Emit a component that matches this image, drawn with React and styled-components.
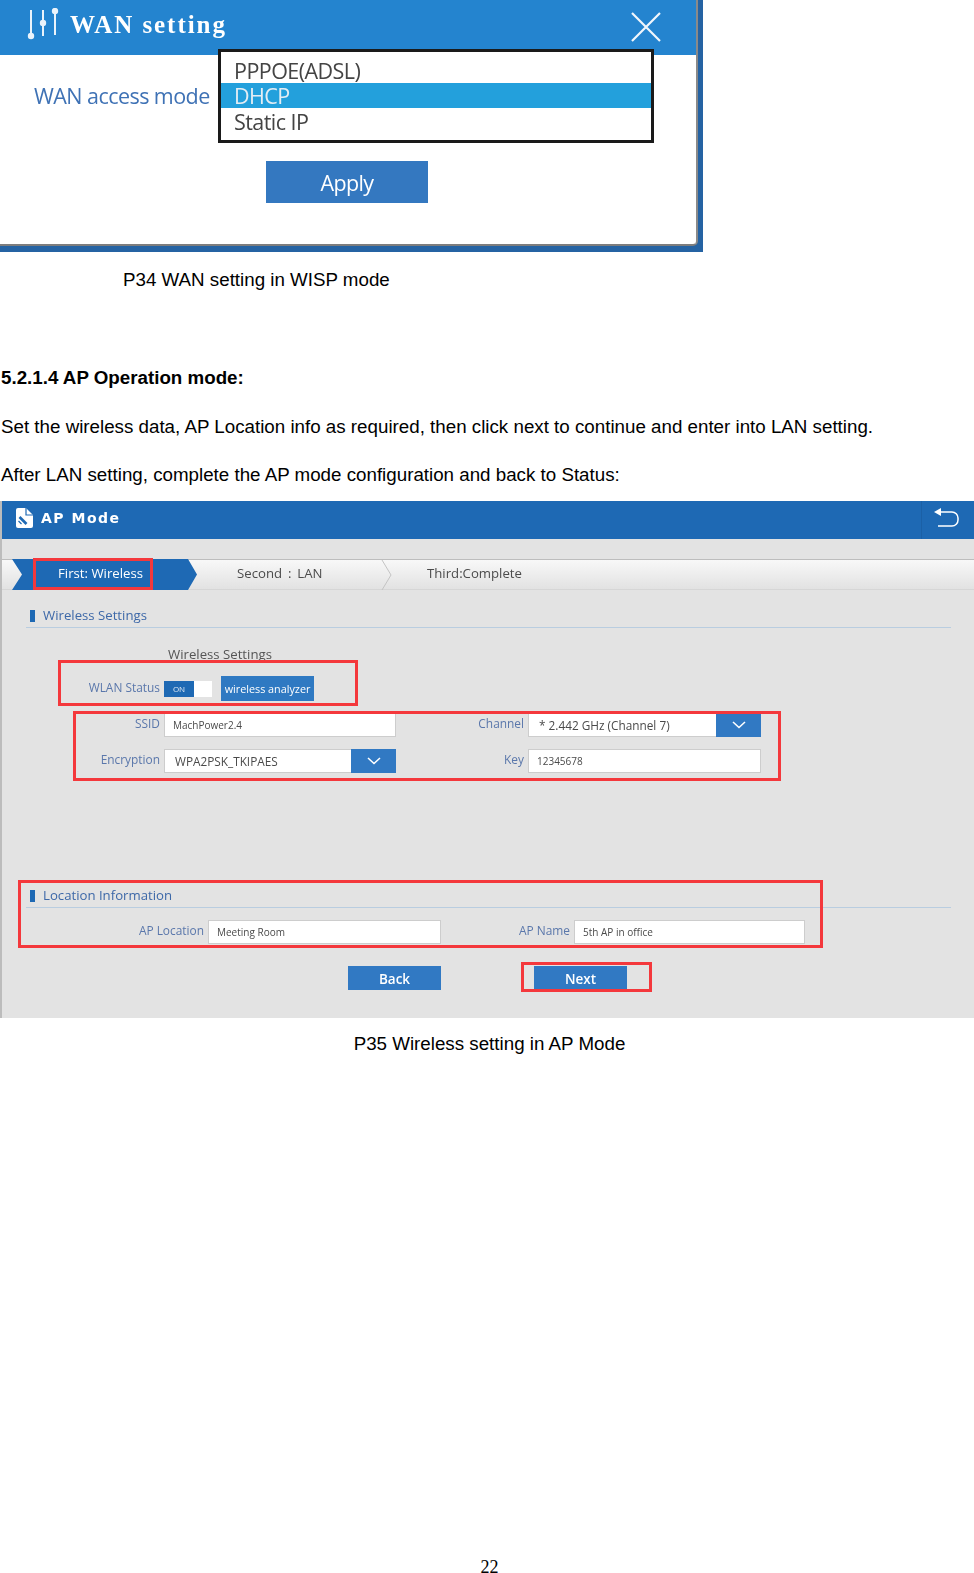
import React from 'react';
import styled, { createGlobalStyle } from 'styled-components';

const GlobalStyle = createGlobalStyle`
  html, body {
    margin: 0;
    padding: 0;
    background: #fff;
  }
  body {
    font-family: "Liberation Sans", Arial, sans-serif;
    color: #000;
  }
`;

const Page = styled.div`
  width: 974px;
  height: 1573px;
  display: flex;
  flex-direction: column;
  overflow: hidden;
`;

/* ---------- document text ---------- */
const Caption = styled.div`
  font-size: 18.76px;
  line-height: 24px;
  padding-left: ${(p) => p.$indent || 0}px;
  text-align: ${(p) => (p.$center ? 'center' : 'left')};
  margin-top: ${(p) => p.$top || 0}px;
`;

const Heading = styled.h3`
  margin: 74px 0 0 1px;
  font-size: 18.76px;
  line-height: 24px;
  font-weight: bold;
`;

const Para = styled.p`
  margin: ${(p) => p.$top || 24}px 0 0 1px;
  font-size: 18.76px;
  line-height: 24px;
  white-space: nowrap;
`;

const PageNumber = styled.div`
  margin-top: auto;
  text-align: center;
  font-family: "Liberation Serif", serif;
  font-size: 18px;
  line-height: 12px;
  padding-left: 5px;
`;

/* ---------- WAN setting dialog ---------- */
const WanShot = styled.div`
  position: relative;
  width: 703px;
  height: 252px;
  box-sizing: border-box;
  padding: 0 5px 6px 0;
  background: #2563a3;
  filter: blur(0.35px);
`;

const WanPanel = styled.div`
  height: 100%;
  box-sizing: border-box;
  background: #fff;
  border-right: 2px solid #8a8a8a;
  border-bottom: 2px solid #7d7d7d;
  border-bottom-right-radius: 5px;
  display: flex;
  flex-direction: column;
`;

const WanHeader = styled.div`
  height: 55px;
  box-sizing: border-box;
  background: #2484cf;
  display: flex;
  align-items: center;
  padding: 0 34px 5px 27px;
  color: #fff;
`;

const WanTitle = styled.div`
  margin-left: 9px;
  font-family: "Liberation Serif", serif;
  font-weight: bold;
  font-size: 25px;
  letter-spacing: 1.95px;
`;

const WanClose = styled.svg`
  margin: 3px 0 0 auto;
  display: block;
`;

const WanBody = styled.div`
  flex: 1;
  padding: 27px 0 0 34px;
`;

const WanLabel = styled.div`
  font-family: "Open Sans", sans-serif;
  font-size: 21.5px;
  line-height: 28px;
  letter-spacing: -0.55px;
  color: #3f72b5;
`;

const ApplyButton = styled.div`
  width: 162px;
  height: 42px;
  margin: 51px 0 0 232px;
  background: #3478c0;
  color: #fff;
  font-family: "Open Sans", sans-serif;
  font-size: 21.5px;
  letter-spacing: -0.6px;
  line-height: 44px;
  text-align: center;
`;

const ModeList = styled.div`
  position: absolute;
  left: 218px;
  top: 49px;
  width: 436px;
  height: 94px;
  box-sizing: border-box;
  border: 3px solid #1a1a1a;
  background: #fff;
  padding-top: 5px;
`;

const ModeOption = styled.div`
  height: ${(p) => (p.$active ? 25 : 26)}px;
  box-sizing: border-box;
  padding: ${(p) => (p.$active ? 0 : 1)}px 0 0 13px;
  line-height: 25px;
  font-family: "Open Sans", sans-serif;
  font-size: 21.5px;
  letter-spacing: -0.55px;
  color: ${(p) => (p.$active ? '#e4edf4' : '#444')};
  background: ${(p) => (p.$active ? '#23a0dc' : 'transparent')};
`;

/* ---------- AP mode screen ---------- */
const ApShot = styled.div`
  position: relative;
  margin-top: 14px;
  width: 974px;
  height: 517px;
  box-sizing: border-box;
  border-left: 2px solid #bcbcbc;
  background: #e3e3e3;
  font-family: "Open Sans", sans-serif;
  color: #555;
  filter: blur(0.3px);
`;

const ApHeader = styled.div`
  height: 38px;
  background: #1e69b4;
  display: flex;
  align-items: stretch;
  color: #fff;
`;

const ApBrand = styled.div`
  display: flex;
  align-items: center;
  gap: 7px;
  padding-left: 14px;
  font-family: "DejaVu Sans", sans-serif;
  font-weight: bold;
  font-size: 14px;
  letter-spacing: 1.5px;
  padding-bottom: 4px;
`;

const BackCorner = styled.div`
  margin-left: auto;
  width: 53px;
  box-sizing: border-box;
  border-left: 1px solid #1b60a6;
  display: flex;
  align-items: center;
  justify-content: center;
  padding: 0 4px 4px 0;
`;

const Steps = styled.div`
  margin-top: 20px;
  height: 31px;
  box-sizing: border-box;
  border-top: 1px solid #bdbdbd;
  border-bottom: 1px solid #d6d6d6;
  background: linear-gradient(#f8f8f8, #e2e2e2);
  display: flex;
  align-items: center;
  font-size: 13.2px;
  color: #4c4c4c;
`;

const StepActive = styled.div`
  position: relative;
  margin-left: 10px;
  width: 185px;
  height: 31px;
  box-sizing: border-box;
  padding-left: 46px;
  line-height: 29px;
  background: #1e69b4;
  color: #fff;
  clip-path: polygon(0 0, 176px 0, 185px 50%, 176px 100%, 0 100%, 10px 50%);
`;

const Step = styled.div`
  width: ${(p) => p.$width}px;
  padding: 0 0 4px ${(p) => p.$pad}px;
  box-sizing: border-box;
  white-space: nowrap;
  word-spacing: ${(p) => p.$spread || 0}px;
`;

const StepChevron = styled.svg`
  flex: none;
  display: block;
`;

const SectionTitle = styled.div`
  margin: ${(p) => p.$top}px 23px 0 24px;
  height: 21px;
  box-sizing: border-box;
  border-bottom: 1px solid #b9cde0;
  display: flex;
  align-items: flex-start;
  gap: 8px;
  padding-left: 4px;
  font-size: 13.2px;
  line-height: 16px;
  color: #3d68a8;

  &::before {
    content: "";
    width: 5px;
    height: 12px;
    margin-top: 3px;
    background: #1e69b4;
  }
`;

const SubTitle = styled.div`
  margin: 18px 0 0 166px;
  font-size: 13.2px;
  line-height: 17px;
  height: 13px;
  overflow: visible;
  color: #555;
`;

const StatusRow = styled.div`
  margin: 17px 0 0;
  display: flex;
  align-items: center;
  height: 25px;
`;

const FieldLabel = styled.div`
  font-size: 11.9px;
  line-height: 14px;
  color: #5a77ab;
  text-align: right;
  white-space: nowrap;
  padding-bottom: ${(p) => (p.$raised ? 4 : 0)}px;
`;

const StatusLabel = styled(FieldLabel)`
  width: 158px;
  padding-bottom: 4px;
`;

const Toggle = styled.div`
  width: 48px;
  height: 16px;
  margin-left: 4px;
  display: flex;
  background: #fff;
`;

const ToggleOn = styled.div`
  width: 30px;
  background: #1e69b4;
  color: #dfe9f4;
  font-size: 8px;
  line-height: 16px;
  text-align: center;
`;

const AnalyzerButton = styled.div`
  width: 93px;
  height: 25px;
  margin-left: 9px;
  background: #2f79c2;
  color: #fff;
  font-size: 10.8px;
  line-height: 26px;
  text-align: center;
  white-space: nowrap;
`;

const FieldGrid = styled.div`
  display: grid;
  grid-template-columns: ${(p) => p.$columns};
  column-gap: 4px;
  row-gap: 12px;
  align-items: center;
  margin-top: ${(p) => p.$top}px;
`;

const TextBox = styled.div`
  height: 24px;
  box-sizing: border-box;
  background: #fff;
  border: 1px solid #cdcdcd;
  padding-left: 8px;
  font-size: 10px;
  line-height: 23px;
  color: #4a4a4a;
  white-space: nowrap;
`;

const SelectBox = styled.div`
  height: 24px;
  box-sizing: border-box;
  background: #fff;
  border: 1px solid #cdcdcd;
  border-right: 0;
  padding-left: 10px;
  display: flex;
  align-items: center;
  font-size: 11.8px;
  color: #4a4a4a;
  white-space: nowrap;
`;

const SelectArrow = styled.div`
  margin-left: auto;
  width: 45px;
  height: 24px;
  flex: none;
  background: #3179c3;
  display: flex;
  align-items: center;
  justify-content: center;
`;

const ButtonRow = styled.div`
  margin: 22px 0 0 346px;
  display: flex;
  gap: 93px;
`;

const ActionButton = styled.div`
  width: 93px;
  height: 24px;
  background: #3179c3;
  color: #fff;
  font-size: 13.5px;
  font-weight: 600;
  line-height: 26px;
  text-align: center;
`;

// red annotation frames drawn over the screenshot
const Mark = styled.div`
  position: absolute;
  left: ${(p) => p.$x - 2}px;
  top: ${(p) => p.$y - 501}px;
  width: ${(p) => p.$w}px;
  height: ${(p) => p.$h}px;
  box-sizing: border-box;
  border: 3px solid #f4383c;
  pointer-events: none;
`;

const SlidersIcon = () => (
  <svg width="34" height="34" viewBox="0 0 34 34" fill="none" stroke="#eaf3fb" strokeWidth="2">
    <path d="M4 2v26M16 2v26M28 3v24" />
    <circle cx="4" cy="28" r="3.2" fill="#eaf3fb" stroke="none" />
    <circle cx="16" cy="15" r="3.2" fill="#eaf3fb" stroke="none" />
    <circle cx="28" cy="3" r="3.2" fill="#eaf3fb" stroke="none" />
  </svg>
);

const DocIcon = () => (
  <svg width="18" height="20" viewBox="0 0 18 20">
    <path d="M2 0h8l7 7v11a2 2 0 0 1-2 2H2a2 2 0 0 1-2-2V2a2 2 0 0 1 2-2z" fill="#fff" />
    <path d="M10 0v7h7" fill="none" stroke="#1e69b4" strokeWidth="1.2" />
    <path d="M3.5 9l7 7" stroke="#1e69b4" strokeWidth="2.6" />
    <path d="M2.5 13l3 3" stroke="#1e69b4" strokeWidth="1.2" />
  </svg>
);

const BackIcon = () => (
  <svg width="26" height="20" viewBox="0 0 26 20" fill="none">
    <path d="M1 4l7-4v8z" fill="#fff" />
    <path d="M7 4h12a6 6 0 0 1 6 6v2a6 6 0 0 1-6 6H5" stroke="#fff" strokeWidth="1.5" />
  </svg>
);

const ChevronDown = () => (
  <svg width="14" height="8" viewBox="0 0 14 8" fill="none">
    <path d="M1 1l6 5.5L13 1" stroke="#fff" strokeWidth="1.6" />
  </svg>
);

const App = () => (
  <>
    <GlobalStyle />
    <Page>
      <WanShot>
        <WanPanel>
          <WanHeader>
            <SlidersIcon />
            <WanTitle>WAN setting</WanTitle>
            <WanClose width="32" height="30" viewBox="0 0 32 30" fill="none">
              <path d="M2 1l28 28M30 1L2 29" stroke="#f1f7fc" strokeWidth="2.2" />
            </WanClose>
          </WanHeader>
          <WanBody>
            <WanLabel>WAN access mode</WanLabel>
            <ApplyButton>Apply</ApplyButton>
          </WanBody>
        </WanPanel>
        <ModeList>
          <ModeOption>PPPOE(ADSL)</ModeOption>
          <ModeOption $active>DHCP</ModeOption>
          <ModeOption>Static IP</ModeOption>
        </ModeList>
      </WanShot>

      <Caption $indent={123} $top={16}>P34 WAN setting in WISP mode</Caption>
      <Heading>5.2.1.4 AP Operation mode:</Heading>
      <Para $top={25}>Set the wireless data, AP Location info as required, then click next to continue and enter into LAN setting.</Para>
      <Para>After LAN setting, complete the AP mode configuration and back to Status:</Para>

      <ApShot>
        <ApHeader>
          <ApBrand>
            <DocIcon />
            AP Mode
          </ApBrand>
          <BackCorner>
            <BackIcon />
          </BackCorner>
        </ApHeader>

        <Steps>
          <StepActive>First: Wireless</StepActive>
          <Step $width={184} $pad={40} $spread={2.5}>Second : LAN</Step>
          <StepChevron width="11" height="30" viewBox="0 0 11 30" fill="none">
            <path d="M1 0l9 15-9 15" stroke="#c4c4c4" />
          </StepChevron>
          <Step $width={200} $pad={35}>Third:Complete</Step>
        </Steps>

        <SectionTitle $top={17}>Wireless Settings</SectionTitle>
        <SubTitle>Wireless Settings</SubTitle>

        <StatusRow>
          <StatusLabel>WLAN Status</StatusLabel>
          <Toggle>
            <ToggleOn>ON</ToggleOn>
          </Toggle>
          <AnalyzerButton>wireless analyzer</AnalyzerButton>
        </StatusRow>

        <FieldGrid $columns="158px 232px 124px 233px" $top={12}>
          <FieldLabel $raised>SSID</FieldLabel>
          <TextBox>MachPower2.4</TextBox>
          <FieldLabel $raised>Channel</FieldLabel>
          <SelectBox>
            * 2.442 GHz (Channel 7)
            <SelectArrow><ChevronDown /></SelectArrow>
          </SelectBox>
          <FieldLabel $raised>Encryption</FieldLabel>
          <SelectBox>
            WPA2PSK_TKIPAES
            <SelectArrow><ChevronDown /></SelectArrow>
          </SelectBox>
          <FieldLabel $raised>Key</FieldLabel>
          <TextBox>12345678</TextBox>
        </FieldGrid>

        <SectionTitle $top={114}>Location Information</SectionTitle>

        <FieldGrid $columns="202px 233px 125px 231px" $top={12}>
          <FieldLabel $raised>AP Location</FieldLabel>
          <TextBox>Meeting Room</TextBox>
          <FieldLabel $raised>AP Name</FieldLabel>
          <TextBox>5th AP in office</TextBox>
        </FieldGrid>

        <ButtonRow>
          <ActionButton>Back</ActionButton>
          <ActionButton>Next</ActionButton>
        </ButtonRow>

        <Mark $x={33} $y={558} $w={120} $h={32} />
        <Mark $x={58} $y={660} $w={300} $h={46} />
        <Mark $x={73} $y={711} $w={708} $h={70} />
        <Mark $x={18} $y={880} $w={805} $h={68} />
        <Mark $x={521} $y={962} $w={131} $h={30} />
      </ApShot>

      <Caption $center $indent={5} $top={14}>P35 Wireless setting in AP Mode</Caption>
      <PageNumber>22</PageNumber>
    </Page>
  </>
);

export default App;
